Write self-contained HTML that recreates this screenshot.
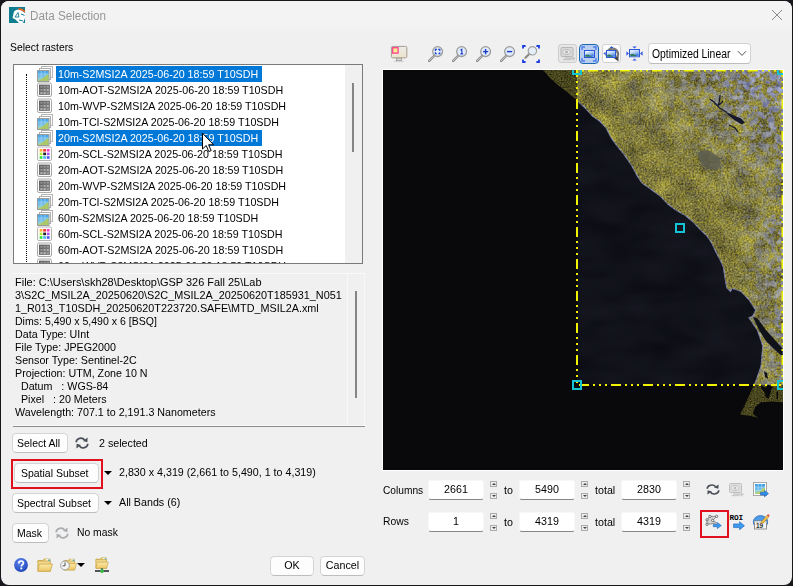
<!DOCTYPE html>
<html>
<head>
<meta charset="utf-8">
<title>Data Selection</title>
<style>
*{box-sizing:border-box;margin:0;padding:0}
html,body{width:793px;height:586px;overflow:hidden;background:#17171c;font-family:"Liberation Sans",sans-serif;font-size:11.5px;color:#000}
#frame{position:absolute;left:1px;top:1px;width:791px;height:584px;background:#f0f0f0;border-radius:8px;overflow:hidden}
#tb{position:absolute;left:0;top:0;width:791px;height:31px;background:linear-gradient(#f3f3f3 0,#f3f3f3 23px,#f0f0f0 31px)}
.a{position:absolute}
.t{position:absolute;white-space:nowrap;transform-origin:0 0;transform:scaleX(.93);line-height:16px;height:16px;font-size:11.5px}
.t.w{color:#fff}
.tc{position:absolute;white-space:nowrap;line-height:16px;height:16px;font-size:11.5px;text-align:center;transform:scaleX(.93)}
.btn{position:absolute;background:#fdfdfd;border:1px solid #d4d4d4;border-bottom-color:#bdbdbd;border-radius:4.5px;height:20px}
.inp{position:absolute;background:#fff;border:1px solid #f8f8f8;border-bottom:1px solid #868686;border-radius:3px;width:56px;height:20px}
.sp{position:absolute;width:7px;height:6px;border:1px solid #acacac;background:#ececec}
.sp:after{content:"";position:absolute;left:.5px;top:1px;width:0;height:0;border-left:2px solid transparent;border-right:2px solid transparent}
.sp.u:after{border-bottom:2.4px solid #444}
.sp.d:after{border-top:2.4px solid #444}
#tree{position:absolute;left:13px;top:64px;width:350px;height:200px;border:1px solid #7a7a7a;background:#fff;overflow:hidden}
#tree .hl{position:absolute;left:42px;height:16px;background:#0078d7}
#tree .ic{position:absolute;left:23px}
.arr{position:absolute;width:0;height:0;border-left:4px solid transparent;border-right:4px solid transparent;border-top:4.5px solid #000}
.red{position:absolute;border:2px solid #e0101c}
</style>
</head>
<body>
<div id="frame"><div id="tb"></div></div>
<svg width="0" height="0" style="position:absolute">
<defs>
<linearGradient id="gsky" x1="0" y1="0" x2="0" y2="1"><stop offset="0" stop-color="#3f9fe6"/><stop offset=".6" stop-color="#7cc4ee"/><stop offset="1" stop-color="#b9d98a"/></linearGradient>
<linearGradient id="ggr" x1="0" y1="0" x2="1" y2="1"><stop offset="0" stop-color="#5a5a5a"/><stop offset="1" stop-color="#8c8c8c"/></linearGradient>
<linearGradient id="gfold" x1="0" y1="0" x2="0" y2="1"><stop offset="0" stop-color="#fbe9a8"/><stop offset="1" stop-color="#ecc765"/></linearGradient>
<linearGradient id="gpic" x1="0" y1="0" x2=".6" y2="1"><stop offset="0" stop-color="#fafcff"/><stop offset=".55" stop-color="#a8c8f4"/><stop offset="1" stop-color="#3b78e0"/></linearGradient>
<radialGradient id="ghelp" cx=".4" cy=".3" r=".8"><stop offset="0" stop-color="#5f86ea"/><stop offset="1" stop-color="#1a3fb8"/></radialGradient>
<symbol id="im" viewBox="0 0 16 16">
<rect x="4.5" y=".5" width="11" height="11" fill="#fff" stroke="#b4b4b4"/>
<rect x="2.5" y="2.5" width="11" height="11" fill="#fff" stroke="#adadad"/>
<rect x=".5" y="4.5" width="11.5" height="11" fill="url(#gsky)" stroke="#9c9c9c"/>
<path d="M1 15 L6 12 L8.5 9.5 L11.5 8 L11.5 15 Z" fill="#a9c96c"/>
<path d="M4.2 5v7M8 5v5M1 8.2h10.5" stroke="#a8d6f4" stroke-width=".8" fill="none" opacity=".8"/>
</symbol>
<symbol id="ig" viewBox="0 0 16 16">
<rect x=".5" y="1" width="14" height="13.5" rx="1.5" fill="#fff" stroke="#a8a8a8"/>
<rect x="2" y="2.6" width="11" height="10.4" fill="url(#ggr)"/>
<g fill="#9a9a9a"><rect x="3.4" y="3.8" width="2" height="1.8"/><rect x="6.6" y="3.8" width="2" height="1.8"/><rect x="9.8" y="3.8" width="2" height="1.8"/>
<rect x="3.4" y="7" width="2" height="1.8"/><rect x="6.6" y="7" width="2" height="1.8" fill="#b4b4b4"/><rect x="9.8" y="7" width="2" height="1.8" fill="#b4b4b4"/>
<rect x="3.4" y="10.2" width="2" height="1.8" fill="#bbb"/><rect x="6.6" y="10.2" width="2" height="1.8" fill="#bbb"/><rect x="9.8" y="10.2" width="2" height="1.8"/></g>
</symbol>
<symbol id="ic" viewBox="0 0 16 16">
<rect x=".5" y="1" width="14" height="13.5" rx="1.5" fill="#fff" stroke="#b4b4b4"/>
<rect x="2.6" y="3" width="2.8" height="2.6" fill="#ffb030"/><rect x="6.2" y="3" width="2.8" height="2.6" fill="#f23a3a"/><rect x="9.8" y="3" width="2.8" height="2.6" fill="#f040c8"/>
<rect x="2.6" y="6.6" width="2.8" height="2.6" fill="#b4ec30"/><rect x="6.2" y="6.6" width="2.8" height="2.6" fill="#222"/><rect x="9.8" y="6.6" width="2.8" height="2.6" fill="#b050f0"/>
<rect x="2.6" y="10.2" width="2.8" height="2.6" fill="#30e040"/><rect x="6.2" y="10.2" width="2.8" height="2.6" fill="#48b8f8"/><rect x="9.8" y="10.2" width="2.8" height="2.6" fill="#4858f0"/>
</symbol>
<symbol id="rf" viewBox="0 0 14 12">
<path d="M1.2 5.2 A4.6 4.2 0 0 1 9.6 3" fill="none" stroke="#4a4f58" stroke-width="1.7"/>
<path d="M8 3.9 L12.6 .6 L12.4 5.2 Z" fill="#4a4f58"/>
<path d="M12.8 6.8 A4.6 4.2 0 0 1 4.4 9" fill="none" stroke="#4a4f58" stroke-width="1.7"/>
<path d="M6 8.1 L1.4 11.4 L1.6 6.8 Z" fill="#4a4f58"/>
</symbol>
<symbol id="mag" viewBox="0 0 16 16">
<path d="M1.2 14.8 L6 10" stroke="#8b8b8b" stroke-width="2.4" stroke-linecap="round"/>
<path d="M1.4 14.6 L5.6 10.4" stroke="#d8d8d8" stroke-width=".8" stroke-linecap="round"/>
<circle cx="9.6" cy="5.6" r="4.9" fill="#e1ebf9" stroke="#9c9c9c" stroke-width="1.3"/>
</symbol>
<symbol id="fold" viewBox="0 0 16 14">
<path d="M1 2.5 h5 l1 -1.5 h6 v3 h-12z" fill="#f3d98a" stroke="#c9a54a" stroke-width=".8"/>
<rect x="9" y="1.2" width="3.5" height="1.6" fill="#fff"/><rect x="11" y="1.6" width="2.2" height="1.4" fill="#38b6e8"/>
<path d="M.8 13.2 V3 h12.4 V13.2z" fill="#f1d88c" stroke="#c9a54a" stroke-width=".8"/>
<path d="M1 13.2 L2.2 6 H15.4 L13.4 13.2z" fill="url(#gfold)" stroke="#cba64c" stroke-width=".8"/>
</symbol>
<symbol id="pic" viewBox="0 0 12 9">
<rect x=".6" y=".6" width="10.8" height="7.8" fill="#e8f1fc" stroke="#2c58d8" stroke-width="1.2"/>
<rect x="1.4" y="1.4" width="9.2" height="6.2" fill="url(#gpic)"/>
<path d="M1.4 7.6 L1.4 5.6 Q3 4.4 5 5.4 Q7 6.6 9 7.6z" fill="#2f7a58"/>
</symbol>
</defs>
</svg>
<!-- title bar -->
<svg class="a" style="left:9px;top:7px" width="16" height="16" viewBox="0 0 16 16">
<rect width="16" height="16" fill="#0f7c8f"/>
<path d="M5 4.5 Q8 1.5 12 3 L16 6 V11 L14 16 H10 L6.5 12.5 L3.5 11 Z" fill="#fff"/>
<path d="M9.5 2.2 Q13.5 1.8 16 5" fill="none" stroke="#f0601f" stroke-width="1.8"/>
<path d="M6 10 L9 5.5 L10 10 Z" fill="none" stroke="#0f7c8f" stroke-width=".9"/>
<path d="M12 7 L15.5 8.4 M10 13 L14 14" stroke="#0f7c8f" stroke-width="1"/>
</svg>
<div class="t" style="left:30px;top:8px;font-size:12px;color:#969696;transform:scaleX(.975)">Data Selection</div>
<svg class="a" style="left:771px;top:9px" width="12" height="12" viewBox="0 0 12 12"><path d="M1 1L11 11M11 1L1 11" stroke="#8a8a8a" stroke-width="1"/></svg>

<div class="t" style="left:10px;top:39px;transform:scaleX(.9)">Select rasters</div>
<div id="tree">
<div class="a" style="left:12px;top:9px;width:0;height:200px;border-left:1px dotted #000"></div>
<div class="hl" style="top:1px;width:206px"></div>
<svg class="ic" style="top:1px" width="16" height="16"><use href="#im"/></svg>
<div class="t w" style="left:44px;top:0.5px">10m-S2MSI2A 2025-06-20 18:59 T10SDH</div>
<svg class="ic" style="top:17px" width="16" height="16"><use href="#ig"/></svg>
<div class="t" style="left:44px;top:16.5px">10m-AOT-S2MSI2A 2025-06-20 18:59 T10SDH</div>
<svg class="ic" style="top:33px" width="16" height="16"><use href="#ig"/></svg>
<div class="t" style="left:44px;top:32.5px">10m-WVP-S2MSI2A 2025-06-20 18:59 T10SDH</div>
<svg class="ic" style="top:49px" width="16" height="16"><use href="#im"/></svg>
<div class="t" style="left:44px;top:48.5px">10m-TCI-S2MSI2A 2025-06-20 18:59 T10SDH</div>
<div class="hl" style="top:65px;width:206px"></div>
<svg class="ic" style="top:65px" width="16" height="16"><use href="#im"/></svg>
<div class="t w" style="left:44px;top:64.5px">20m-S2MSI2A 2025-06-20 18:59 T10SDH</div>
<svg class="ic" style="top:81px" width="16" height="16"><use href="#ic"/></svg>
<div class="t" style="left:44px;top:80.5px">20m-SCL-S2MSI2A 2025-06-20 18:59 T10SDH</div>
<svg class="ic" style="top:97px" width="16" height="16"><use href="#ig"/></svg>
<div class="t" style="left:44px;top:96.5px">20m-AOT-S2MSI2A 2025-06-20 18:59 T10SDH</div>
<svg class="ic" style="top:113px" width="16" height="16"><use href="#ig"/></svg>
<div class="t" style="left:44px;top:112.5px">20m-WVP-S2MSI2A 2025-06-20 18:59 T10SDH</div>
<svg class="ic" style="top:129px" width="16" height="16"><use href="#im"/></svg>
<div class="t" style="left:44px;top:128.5px">20m-TCI-S2MSI2A 2025-06-20 18:59 T10SDH</div>
<svg class="ic" style="top:145px" width="16" height="16"><use href="#im"/></svg>
<div class="t" style="left:44px;top:144.5px">60m-S2MSI2A 2025-06-20 18:59 T10SDH</div>
<svg class="ic" style="top:161px" width="16" height="16"><use href="#ic"/></svg>
<div class="t" style="left:44px;top:160.5px">60m-SCL-S2MSI2A 2025-06-20 18:59 T10SDH</div>
<svg class="ic" style="top:177px" width="16" height="16"><use href="#ig"/></svg>
<div class="t" style="left:44px;top:176.5px">60m-AOT-S2MSI2A 2025-06-20 18:59 T10SDH</div>
<svg class="ic" style="top:193px" width="16" height="16"><use href="#ig"/></svg>
<div class="t" style="left:44px;top:192.5px">60m-WVP-S2MSI2A 2025-06-20 18:59 T10SDH</div>
<div class="a" style="left:331px;top:0;width:17px;height:198px;background:#f0f0f0"></div>
<div class="a" style="left:338px;top:18px;width:2px;height:69px;background:#858585"></div>
</div>

<!-- info box -->
<div class="a" style="left:13px;top:273px;width:352px;height:154px;border-top:1px solid #fafafa;border-bottom:1px solid #8c8c8c;"></div>
<div class="a" style="left:13px;top:425px;width:352px;height:1px;background:#fbfbfb"></div>
<div class="a" style="left:347px;top:273px;width:1px;height:152px;background:#f9f9f9"></div>
<div class="a" style="left:364px;top:273px;width:1px;height:152px;background:#f8f8f8"></div>
<div class="a" style="left:355px;top:291px;width:2px;height:107px;background:#858585"></div>
<div class="t" style="left:15px;top:273.5px;transform:scaleX(0.953)">File: C:\Users\skh28\Desktop\GSP 326 Fall 25\Lab</div>
<div class="t" style="left:15px;top:286.5px;transform:scaleX(0.943)">3\S2C_MSIL2A_20250620\S2C_MSIL2A_20250620T185931_N051</div>
<div class="t" style="left:15px;top:299.5px;transform:scaleX(0.939)">1_R013_T10SDH_20250620T223720.SAFE\MTD_MSIL2A.xml</div>
<div class="t" style="left:15px;top:312.5px;transform:scaleX(0.917)">Dims: 5,490 x 5,490 x 6 [BSQ]</div>
<div class="t" style="left:15px;top:325.5px;transform:scaleX(0.93)">Data Type: UInt</div>
<div class="t" style="left:15px;top:338.5px;transform:scaleX(0.93)">File Type: JPEG2000</div>
<div class="t" style="left:15px;top:351.5px;transform:scaleX(0.93)">Sensor Type: Sentinel-2C</div>
<div class="t" style="left:15px;top:364.5px;transform:scaleX(0.93)">Projection: UTM, Zone 10 N</div>
<div class="t" style="left:15px;top:377.5px;transform:scaleX(0.93)">&nbsp; Datum &nbsp; : WGS-84</div>
<div class="t" style="left:15px;top:390.5px;transform:scaleX(0.93)">&nbsp; Pixel &nbsp; : 20 Meters</div>
<div class="t" style="left:15px;top:403.5px;transform:scaleX(0.93)">Wavelength: 707.1 to 2,191.3 Nanometers</div>

<!-- buttons -->
<div class="btn" style="left:12px;top:433px;width:56px"></div>
<div class="t" style="left:17px;top:434.5px;transform:scaleX(.91)">Select All</div>
<svg class="a" style="left:75px;top:437px" width="14" height="12"><use href="#rf"/></svg>
<div class="t" style="left:99px;top:434.5px">2 selected</div>

<div class="red" style="left:11px;top:459px;width:91.500px;height:30px"></div>
<div class="btn" style="left:14px;top:463px;width:85px"></div>
<div class="t" style="left:21px;top:464.5px;transform:scaleX(.91)">Spatial Subset</div>
<div class="arr" style="left:104px;top:471px"></div>
<div class="t" style="left:119px;top:463.5px">2,830 x 4,319 (2,661 to 5,490, 1 to 4,319)</div>

<div class="btn" style="left:12px;top:493px;width:87px"></div>
<div class="t" style="left:17px;top:494.5px;transform:scaleX(.91)">Spectral Subset</div>
<div class="arr" style="left:104px;top:501px"></div>
<div class="t" style="left:119px;top:493.5px">All Bands (6)</div>

<div class="btn" style="left:12px;top:523px;width:37px"></div>
<div class="t" style="left:17px;top:524.5px;transform:scaleX(.91)">Mask</div>
<svg class="a" style="left:55px;top:527px;opacity:.42" width="14" height="12"><use href="#rf"/></svg>
<div class="t" style="left:77px;top:523.5px;transform:scaleX(.9)">No mask</div>

<!-- bottom icons -->
<svg class="a" style="left:13px;top:557px" width="16" height="16" viewBox="0 0 16 16">
<circle cx="8" cy="8" r="6.9" fill="url(#ghelp)"/>
<path d="M5.8 6.4 Q5.8 4 8.1 4 Q10.4 4 10.4 6 Q10.4 7.2 9 8 Q8.4 8.5 8.4 9.4" fill="none" stroke="#fff" stroke-width="1.7"/>
<rect x="7.4" y="10.5" width="1.9" height="1.8" fill="#fff"/>
</svg>
<svg class="a" style="left:37px;top:558px" width="16" height="14"><use href="#fold"/></svg>
<svg class="a" style="left:63px;top:558px" width="14" height="13"><use href="#fold"/></svg>
<svg class="a" style="left:60px;top:559px" width="10" height="13" viewBox="0 0 10 13"><circle cx="5" cy="6.5" r="4.4" fill="#f4f4f4" stroke="#9a9a9a" stroke-width=".9"/><path d="M5 3.4V6.8H2.6" stroke="#444" stroke-width=".9" fill="none"/></svg>
<div class="arr" style="left:77px;top:563px"></div>
<svg class="a" style="left:95px;top:557px" width="14" height="12"><use href="#fold"/></svg>
<div class="a" style="left:95px;top:570px;width:14px;height:1.5px;background:#555"></div>
<div class="a" style="left:101px;top:568px;width:1.5px;height:3px;background:#666"></div>
<div class="a" style="left:99.5px;top:568.5px;width:4.5px;height:4px;border-radius:2px;background:#3cb84a"></div>

<div class="btn" style="left:270px;top:556px;width:44px"></div>
<div class="tc" style="left:270px;top:557px;width:44px">OK</div>
<div class="btn" style="left:320px;top:556px;width:45px"></div>
<div class="tc" style="left:320px;top:557px;width:45px">Cancel</div>

<!-- cursor -->
<svg class="a" style="left:201px;top:132px" width="14" height="21" viewBox="0 0 14 21"><path d="M1.5 1.2 L1.5 17 L5.2 13.6 L7.8 19.6 L10.2 18.6 L7.6 12.8 L12.6 12.8 Z" fill="#fff" stroke="#000" stroke-width="1"/></svg>
<!-- toolbar -->
<svg class="a" style="left:390px;top:45px" width="18" height="18" viewBox="0 0 18 18">
<defs><linearGradient id="gmon" x1="0" y1="0" x2="0" y2="1"><stop offset="0" stop-color="#ececec"/><stop offset="1" stop-color="#ede3c9"/></linearGradient></defs>
<ellipse cx="9" cy="16.3" rx="6" ry=".9" fill="#d5d5d5"/>
<rect x="6.5" y="13" width="5" height="2.6" fill="#dcdcdc" stroke="#9a9a9a" stroke-width=".8"/>
<rect x="1.4" y="1.4" width="15.4" height="11.4" rx="1.2" fill="url(#gmon)" stroke="#a59c8c" stroke-width="1"/>
<rect x="2.7" y="2.7" width="5.4" height="5.4" fill="#f6ee93" stroke="#ff3f8f" stroke-width="1.3"/>
</svg>
<svg class="a" style="left:428px;top:46px" width="16" height="16"><use href="#mag"/><path d="M7.400 4.900V3.400H8.900M10.300 3.400H11.800V4.900M11.800 6.300V7.800H10.300M8.900 7.800H7.400V6.300" fill="none" stroke="#1838c8" stroke-width="1.100"/></svg>
<svg class="a" style="left:452px;top:46px" width="16" height="16"><use href="#mag"/><path d="M8.500 4.300L9.800 3.300V7.900M8.500 7.900H11.100" fill="none" stroke="#1838c8" stroke-width="1.100"/></svg>
<svg class="a" style="left:476px;top:46px" width="16" height="16"><use href="#mag"/><path d="M7 5.6H12.2M9.6 3V8.2" fill="none" stroke="#1838c8" stroke-width="1.4"/></svg>
<svg class="a" style="left:500px;top:46px" width="16" height="16"><use href="#mag"/><path d="M7 5.6H12.2" fill="none" stroke="#1838c8" stroke-width="1.4"/></svg>
<svg class="a" style="left:522px;top:45px" width="18" height="18" viewBox="0 0 18 18">
<path d="M3.4 12.8 L7 9.2" stroke="#8b8b8b" stroke-width="2.2" stroke-linecap="round"/>
<circle cx="10.4" cy="5.8" r="4.2" fill="#e4edf9" stroke="#a0a0a0" stroke-width="1.2"/>
<path d="M1 3.600V1H3.600M14.400 1H17V3.600M17 14.400V17H14.400M3.600 17H1V14.400" fill="none" stroke="#1c3fe0" stroke-width="1.8"/>
</svg>

<div class="a" style="left:558px;top:44px;width:19px;height:19px;background:#e6e6e6;border:1px solid #cdcdcd;border-radius:3px"></div>
<svg class="a" style="left:560px;top:46px;opacity:.55" width="16" height="16" viewBox="0 0 16 16">
<rect x="1" y="1.5" width="12" height="9" rx="1" fill="#d0d0d0" stroke="#8f8f8f"/>
<ellipse cx="6.5" cy="6" rx="4" ry="2.6" fill="#f0f0f0" stroke="#8a8a8a" stroke-width=".8"/><circle cx="6.5" cy="6" r="1.5" fill="#8a8a8a"/>
<rect x="4.5" y="11" width="5" height="2" fill="#b8b8b8"/><rect x="3" y="13" width="8" height="1.2" fill="#a8a8a8"/>
<path d="M9 11.5h3.5v-1.5l3 2.4-3 2.4v-1.5H9z" fill="#aaa"/>
</svg>

<div class="a" style="left:579px;top:44px;width:20px;height:20px;background:#b9cdee;border:1.5px solid #1b66b3;border-radius:4px"></div>
<svg class="a" style="left:581px;top:46px" width="16" height="16" viewBox="0 0 16 16">
<path d="M1 4V1H4M12 1H15V4M15 12V15H12M4 15H1V12" fill="none" stroke="#4c7cf0" stroke-width="1.4"/>
</svg>
<svg class="a" style="left:583.500px;top:49.800px" width="11" height="8" viewBox="0 0 12 9" preserveAspectRatio="none"><use href="#pic"/></svg>

<div class="a" style="left:602px;top:44px;width:19px;height:19px;background:#fdfdfd;border:1px solid #d2d2d2;border-radius:3px"></div>
<svg class="a" style="left:603px;top:45px" width="18" height="18" viewBox="0 0 18 18">
<path d="M4.2 11.5 A5.6 5.6 0 1 1 13.5 13" fill="none" stroke="#7a7a7a" stroke-width="2.6"/>
<path d="M10 12.4 L15.4 12 L15.6 16.6 Z" fill="#444"/>
<path d="M0.5 8.5l2-1.8v3.6zM8.5 1l-1.8 2h3.6z" fill="#2c58d8"/>
</svg>
<svg class="a" style="left:606px;top:50px" width="10" height="8" viewBox="0 0 12 9" preserveAspectRatio="none"><use href="#pic"/></svg>

<svg class="a" style="left:626px;top:46px" width="17" height="15" viewBox="0 0 17 15">
<path d="M3 7.5L.4 5.3v4.4zM14 7.5l2.6-2.2v4.4zM8.500 2.600L6.300.4h4.400zM8.500 12.400l-2.200 2.200h4.400z" fill="#3458e8"/>
</svg>
<svg class="a" style="left:629px;top:49px" width="11" height="8.500" viewBox="0 0 12 9" preserveAspectRatio="none"><use href="#pic"/></svg>

<div class="a" style="left:648px;top:43px;width:103px;height:21px;background:#fefefe;border:1px solid #d3d3d3;border-bottom-color:#bdbdbd;border-radius:4px"></div>
<div class="t" style="left:652px;top:46px;font-size:12px;transform:scaleX(.864)">Optimized Linear</div>
<svg class="a" style="left:737px;top:50px" width="10" height="7" viewBox="0 0 10 7"><path d="M1 1.2L5 5.4L9 1.2" fill="none" stroke="#555" stroke-width="1"/></svg>

<!-- columns / rows -->
<div class="t" style="left:383px;top:481.500px;transform:scaleX(.885)">Columns</div>
<div class="inp" style="left:428px;top:480px"></div><div class="tc" style="left:428px;top:481px;width:56px">2661</div>
<div class="sp u" style="left:490px;top:481px"></div><div class="sp d" style="left:490px;top:493px"></div>
<div class="t" style="left:504px;top:481.500px">to</div>
<div class="inp" style="left:519px;top:480px"></div><div class="tc" style="left:519px;top:481px;width:56px">5490</div>
<div class="sp u" style="left:581px;top:481px"></div><div class="sp d" style="left:581px;top:493px"></div>
<div class="t" style="left:595px;top:481.500px">total</div>
<div class="inp" style="left:621px;top:480px"></div><div class="tc" style="left:621px;top:481px;width:56px">2830</div>
<div class="sp u" style="left:683px;top:481px"></div><div class="sp d" style="left:683px;top:493px"></div>

<div class="t" style="left:383px;top:513px;transform:scaleX(.9)">Rows</div>
<div class="inp" style="left:428px;top:512px"></div><div class="tc" style="left:428px;top:513px;width:56px">1</div>
<div class="sp u" style="left:490px;top:513px"></div><div class="sp d" style="left:490px;top:525px"></div>
<div class="t" style="left:504px;top:513.500px">to</div>
<div class="inp" style="left:519px;top:512px"></div><div class="tc" style="left:519px;top:513px;width:56px">4319</div>
<div class="sp u" style="left:581px;top:513px"></div><div class="sp d" style="left:581px;top:525px"></div>
<div class="t" style="left:595px;top:513.500px">total</div>
<div class="inp" style="left:621px;top:512px"></div><div class="tc" style="left:621px;top:513px;width:56px">4319</div>
<div class="sp u" style="left:683px;top:513px"></div><div class="sp d" style="left:683px;top:525px"></div>

<!-- right icons row 1 -->
<svg class="a" style="left:706px;top:484px" width="14" height="11" viewBox="0 0 14 12" preserveAspectRatio="none"><use href="#rf"/></svg>
<svg class="a" style="left:728px;top:482px;opacity:.5" width="17" height="16" viewBox="0 0 16 16">
<rect x="1" y="1.5" width="12" height="9" rx="1" fill="#d0d0d0" stroke="#8f8f8f"/>
<ellipse cx="6.5" cy="6" rx="4" ry="2.6" fill="#f0f0f0" stroke="#8a8a8a" stroke-width=".8"/><circle cx="6.5" cy="6" r="1.5" fill="#8a8a8a"/>
<rect x="4.5" y="11" width="5" height="2" fill="#b8b8b8"/><rect x="3" y="13" width="8" height="1.2" fill="#a8a8a8"/>
<path d="M9 11.5h3.5v-1.5l3 2.4-3 2.4v-1.5H9z" fill="#aaa"/>
</svg>
<svg class="a" style="left:753px;top:482px" width="16" height="16" viewBox="0 0 16 16">
<rect x=".5" y=".5" width="13" height="13" fill="#fff" stroke="#a8a8a8"/>
<rect x="2" y="2" width="10" height="10" fill="url(#gsky)"/>
<path d="M2 12L7 9L9.5 6.5L12 5.5V12z" fill="#b4cf6c"/>
<path d="M5.3 2v8M8.6 2v6M2 5.3h10M2 8.6h6" stroke="#b5dcf6" stroke-width=".7" opacity=".8"/>
<path d="M7.5 10.2h4V8.4l4 3.2-4 3.2v-1.8h-4z" fill="#2f8fe8" stroke="#1b62b8" stroke-width=".6"/>
</svg>

<!-- right icons row 2 -->
<div class="red" style="left:700px;top:510px;width:29px;height:28px"></div>
<svg class="a" style="left:705px;top:514px" width="17" height="16" viewBox="0 0 17 16">
<path d="M4.900 2.400L11.700 2.400L7.700 6.400L11.700 9L2 10.400L2 5.800z" fill="#d2d2d2" stroke="#7a7a7a" stroke-width=".8"/>
<g fill="#fff" stroke="#555" stroke-width=".8"><circle cx="4.900" cy="2.400" r="1.150"/><circle cx="11.700" cy="2.400" r="1.150"/><circle cx="7.700" cy="6.400" r="1.150"/><circle cx="2" cy="5.800" r="1.150"/><circle cx="2" cy="10.400" r="1.150"/></g>
<path d="M8.300 10.500h4V8.600l4 3-4 3v-1.900h-4z" fill="#3b9bf0" stroke="#1b62b8" stroke-width=".6"/>
</svg>
<div class="a" style="left:729.500px;top:513.500px;font-family:'Liberation Mono',monospace;font-weight:bold;font-size:7.800px;line-height:8px;letter-spacing:-.2px;color:#000">ROI</div>
<svg class="a" style="left:732.500px;top:520.500px" width="12" height="9.500" viewBox="0 0 13 11" preserveAspectRatio="none"><path d="M.6 3.4h6.6V.8l5.2 4.7-5.2 4.7V7.6H.6z" fill="#3b9bf0" stroke="#1b62b8" stroke-width=".7"/></svg>
<svg class="a" style="left:752px;top:513px" width="18" height="17" viewBox="0 0 18 17">
<ellipse cx="8.5" cy="9" rx="7.2" ry="6.4" fill="#4d9be6" stroke="#2c6fba" stroke-width=".8"/>
<rect x="2.5" y="8" width="12" height="8" fill="#f4f4f4" stroke="#7c7c7c" stroke-width=".8"/>
<rect x="2.5" y="8" width="12" height="2" fill="#d8d8d8"/>
<text x="4" y="15.4" font-family="Liberation Sans" font-size="6.5" font-weight="bold" fill="#333">19</text>
<path d="M9.5 8.5L15 2.2L16.8 3.8L11.3 10L9 10.8z" fill="#f2c24e" stroke="#a6751e" stroke-width=".6"/>
<path d="M15 2.2L16 1.1L17.7 2.6L16.8 3.8z" fill="#e84a4a"/>
</svg>
<!-- image viewport -->
<div class="a" style="left:382px;top:69px;width:402px;height:402px;background:#fff"></div>
<svg class="a" style="left:383px;top:70px" width="400" height="400" viewBox="383 70 400 400">
<defs>
<clipPath id="cbox"><rect x="577" y="70" width="206" height="315"/></clipPath>
<path id="land" d="M543 70 L551 79 L558.600 85.500 L567 92 L577.400 100.500 L585 107.500 L592.700 116 L600 121 L606.400 128 L611 137 L616.600 145 L624 154 L632 165.600 L637 175 L642 182.700 L651 189 L661 196.400 L668 204 L676.300 210 L685 215 L693.400 222 L700 229 L707 235.600 L712 243 L717 253.700 L721 261 L723.700 267.300 L725.400 279 L727 287.800 L730.500 291 L732 288 L740.800 291 L749.300 299.700 L756 310 L752.700 316.800 L749.300 317.800 L757.800 330.400 L763 345.800 L762 358 L761.300 366.300 L756 381.600 L753 387 L748 398 L744 407 L740 414.600 L749.200 415.700 L758 417.600 L752.700 413.800 L755 406.900 L761 402.300 L771.900 401.500 L783 402.300 L783 70 Z"/>
<path id="bays" d="M753 317 L757 318 L766 330 L775 340 L783 349 L783 357 L774 349 L766 341 L759 330 Z M761.100 385.400 L765.700 387.700 L768 384.600 L772.600 386.900 L771.100 390 L768.800 398.400 L765.700 397.700 L765 393 L761.100 388.400 Z M776.500 391.500 L778 392 L778 399 L776.500 399 Z M764 371 l3 2 l1 6 l-3 -2z"/>
<linearGradient id="gne" gradientUnits="userSpaceOnUse" x1="655" y1="195" x2="790" y2="60"><stop offset="0" stop-color="#fff" stop-opacity=".04"/><stop offset=".25" stop-color="#fff" stop-opacity=".14"/><stop offset=".5" stop-color="#fff" stop-opacity=".42"/><stop offset=".75" stop-color="#fff" stop-opacity=".8"/><stop offset="1" stop-color="#fff" stop-opacity="1"/></linearGradient>
<linearGradient id="gne2" gradientUnits="userSpaceOnUse" x1="730" y1="0" x2="783" y2="0"><stop offset="0" stop-color="#fff" stop-opacity="0"/><stop offset="1" stop-color="#fff" stop-opacity=".6"/></linearGradient>
<clipPath id="clow"><rect x="700" y="215" width="90" height="175"/></clipPath>
<filter id="fland" x="0" y="0" width="100%" height="100%" color-interpolation-filters="sRGB">
<feTurbulence type="fractalNoise" baseFrequency=".55" numOctaves="2" seed="4" result="f0"/>
<feColorMatrix in="f0" type="matrix" values="1 0 0 0 0  0 1 0 0 0  0 0 1 0 0  0 0 0 0 1" result="f"/>
<feTurbulence type="fractalNoise" baseFrequency=".045" numOctaves="3" seed="7" result="c0"/>
<feColorMatrix in="c0" type="matrix" values="1 0 0 0 0  0 1 0 0 0  0 0 1 0 0  0 0 0 0 1" result="c"/>
<feComposite in="f" in2="c" operator="arithmetic" k1="0" k2=".55" k3=".4" k4=".025" result="m"/>
<feColorMatrix in="m" type="matrix" values="1.1 0 0 0 -.05  1.05 0 0 0 -.05  .3 .15 0 0 -.02  0 0 0 0 1"/>
<feComposite operator="in" in2="SourceGraphic"/>
</filter>
<filter id="fspk" x="0" y="0" width="100%" height="100%" color-interpolation-filters="sRGB">
<feTurbulence type="fractalNoise" baseFrequency=".16" numOctaves="5" seed="9" result="n"/>
<feColorMatrix in="n" type="matrix" values="0 0 .6 0 .25  0 0 .6 0 .28  0 0 .5 0 .55  0 5 0 0 -2"/>
<feComposite operator="in" in2="SourceGraphic"/>
</filter>
<filter id="fdim" x="0" y="0" width="100%" height="100%" color-interpolation-filters="sRGB">
<feTurbulence type="fractalNoise" baseFrequency=".7" numOctaves="2" seed="4" result="n"/>
<feColorMatrix in="n" type="matrix" values=".46 0 0 0 .05  .44 0 0 0 .05  .17 0 0 0 .03  0 0 0 0 1"/>
<feComposite operator="in" in2="SourceGraphic"/>
</filter>
<filter id="focn" x="0" y="0" width="100%" height="100%" color-interpolation-filters="sRGB">
<feTurbulence type="fractalNoise" baseFrequency=".02 .05" numOctaves="2" seed="2"/>
<feColorMatrix type="matrix" values=".06 0 0 0 .035  .06 0 0 0 .04  .08 0 0 0 .06  0 0 0 0 1"/>
</filter>
</defs>
<rect x="383" y="70" width="400" height="400" fill="#09090c"/>
<use href="#land" fill="#3a3820" filter="url(#fdim)"/>
<use href="#bays" fill="#09090c"/>
<g clip-path="url(#cbox)">
<rect x="577" y="70" width="206" height="315" fill="#0e101b" filter="url(#focn)"/>
<use href="#land" fill="none" stroke="#8890c0" stroke-width="1.6" opacity=".7"/>
<use href="#land" fill="#8f8a3c" filter="url(#fland)"/>
<use href="#land" fill="url(#gne)" filter="url(#fspk)"/>
<g clip-path="url(#clow)"><use href="#land" fill="url(#gne2)" filter="url(#fspk)"/></g>
<use href="#bays" fill="#10121a"/>
<use href="#land" fill="none" stroke="#9aa2d8" stroke-width="1.2" stroke-dasharray="3 2 1 3 5 2 2 4" opacity=".55"/>
<path d="M709.600 98.700 L714 102 L719 107.500 L727 112.500 M720 95 L719.500 101 L718 106 M723 101 L719 105 M729 125 l6 3 l3 4" fill="none" stroke="#15172c" stroke-width="1.200"/><path d="M726 112 L734 115.500 L741 118.500 L745 122.500 L742 124.500 L735 120.500 L728 115 Z" fill="#15172c"/>
<path d="M698 153 Q702 149 710 151 L720 158 Q722 166 717 171 L706 169 Q698 162 698 153Z" fill="#5b5c50" opacity=".8"/>
</g>
<path d="M577 67V385" stroke="#f2f200" stroke-width="2" stroke-dasharray="10 4 2 4 2 4 2 4" fill="none"/>
<path d="M579 385H783" stroke="#f2f200" stroke-width="2" stroke-dasharray="10 4 2 4 2 4 2 4" fill="none"/>
<path d="M577 70.500H783" stroke="#f2f200" stroke-width="2" stroke-dasharray="10 4 2 4 2 4 2 4" stroke-dashoffset="21" fill="none"/>
<path d="M782.500 67V385" stroke="#f2f200" stroke-width="2" stroke-dasharray="10 4 2 4 2 4 2 4" fill="none"/>
<g fill="none" stroke="#14c4d4" stroke-width="2">
<rect x="573" y="66" width="8" height="8"/><rect x="573" y="381" width="8" height="8"/>
<rect x="778" y="66" width="8" height="8"/><rect x="778" y="381" width="8" height="8"/>
<rect x="676" y="224" width="8" height="8"/>
</g>
</svg>
</body>
</html>
